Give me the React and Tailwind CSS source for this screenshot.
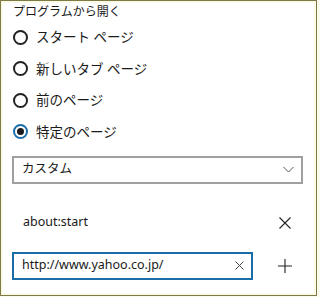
import React from "react";

const options = ["スタート ページ", "新しいタブ ページ", "前のページ", "特定のページ"];

export default function App() {
  const font = { fontFamily: '"Noto Sans", "Noto Sans CJK JP", sans-serif' };
  return (
    <div className="w-[320px] h-[297px] bg-[#fbfbee]" style={font}>
      <div className="w-[317px] h-[296px] border border-[#7d7a45] bg-[#fafae6] p-[2px]">
        <div className="w-full h-full bg-white flex flex-col text-[#1a1a1a]">
          <div className="pl-[10px] text-[12px] leading-[18px]">プログラムから開く</div>

          <div className="flex flex-col gap-[13.5px] pl-[10px] mt-[7px]">
            {options.map((o, i) => (
              <div key={i} className="flex items-center h-[18px] gap-[8px]">
                {i === 3 ? (
                  <span className="w-[15px] h-[15px] rounded-full border-[2px] border-[#1a6ea8] flex items-center justify-center">
                    <span className="w-[7px] h-[7px] rounded-full bg-[#1a1a1a]" />
                  </span>
                ) : (
                  <span className="w-[15px] h-[15px] rounded-full border-[2px] border-[#222]" />
                )}
                <span className="text-[13.5px] leading-[18px]">{o}</span>
              </div>
            ))}
          </div>

          <div className="ml-[9px] w-[291px] mt-[15px] h-[28px] border-[2px] border-[#a0a0a0] flex items-center justify-between pl-[8px] pr-[7px]">
            <span className="text-[12.5px]">カスタム</span>
            <svg width="11" height="7" viewBox="0 0 11 7" fill="none" stroke="#555" strokeWidth="1">
              <path d="M0.5 1 L5.5 6 L10.5 1" />
            </svg>
          </div>

          <div className="flex items-center justify-between mt-[28px] pl-[20px] pr-[23px] h-[22px]">
            <span className="text-[12.5px]">about:start</span>
            <svg width="12" height="12" viewBox="0 0 12 12" stroke="#222" strokeWidth="1.1">
              <path d="M0.5 0.5 L11.5 11.5 M11.5 0.5 L0.5 11.5" />
            </svg>
          </div>

          <div className="flex items-center mt-[18px] pl-[9px]">
            <div className="w-[241px] h-[28px] border-[2px] border-[#1a6ea8] flex items-center justify-between pl-[8px] pr-[7px]">
              <span className="text-[12.5px]">http://www.yahoo.co.jp/</span>
              <svg width="9" height="9" viewBox="0 0 9 9" stroke="#444" strokeWidth="1">
                <path d="M0.5 0.5 L8.5 8.5 M8.5 0.5 L0.5 8.5" />
              </svg>
            </div>
            <div className="ml-[25px]">
              <svg width="14" height="14" viewBox="0 0 14 14" stroke="#222" strokeWidth="1.1">
                <path d="M7 0 V14 M0 7 H14" />
              </svg>
            </div>
          </div>
        </div>
      </div>
    </div>
  );
}
